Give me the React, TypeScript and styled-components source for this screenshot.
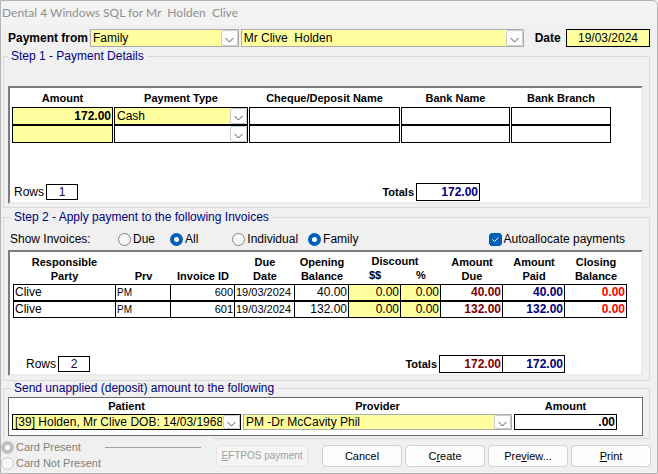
import React from "react";
import styled, { createGlobalStyle, css } from "styled-components";

const YELLOW = "#ffff9f";
const NAVY = "#000080";
const MAROON = "#800000";
const RED = "#ff0000";

const GlobalStyle = createGlobalStyle`
  *, *::before, *::after { box-sizing: border-box; }
  body {
    margin: 0;
    background: #f0f0f0;
    color: #000;
    font-family: "Liberation Sans", Arial, sans-serif;
    font-size: 12px;
    line-height: 14px;
  }
  input, select, button { font: inherit; color: inherit; margin: 0; }
`;

const Window = styled.form`
  display: flex;
  flex-direction: column;
  min-height: 100vh;
  border: 1px solid #b4b4b4;
  border-radius: 0 5px 0 0;
  background: #f0f0f0;
`;

const TitleBar = styled.header`
  height: 24px;
  padding: 0 1px;
  background: #f3f3f3;
  color: #8f8f8f;
  font-family: Lato, "Open Sans", sans-serif;
  font-size: 12px;
  line-height: 24px;
  white-space: pre;
  border-radius: 0 5px 0 0;
`;

const TopRow = styled.div`
  display: flex;
  align-items: center;
  gap: 2px;
  padding: 4px 7px 0;
`;

const FieldLabel = styled.label<{ $width: number; $align?: string }>`
  flex: 0 0 ${(p) => p.$width}px;
  font-weight: bold;
  text-align: ${(p) => p.$align || "left"};
  white-space: nowrap;
`;

const DateInput = styled.input`
  flex: 0 0 84px;
  width: 84px;
  height: 18px;
  padding: 0;
  border: 1px solid #000;
  background: ${YELLOW};
  text-align: center;
`;

const ComboBox = styled.div<{ $grow?: number; $edge?: string; $height: number }>`
  position: relative;
  flex: ${(p) => p.$grow || 1} 1 0;
  min-width: 0;
  height: ${(p) => p.$height}px;
  border: 1px solid ${(p) => p.$edge || "#a9adb3"};
  background: ${YELLOW};
`;

const ComboSelect = styled.select`
  display: block;
  appearance: none;
  width: 100%;
  height: 100%;
  padding: 0 18px 0 2px;
  border: 0;
  border-radius: 0;
  outline: 0;
  background: transparent;
`;

const ComboArrow = styled.span`
  position: absolute;
  top: 0;
  right: 0;
  bottom: 0;
  display: flex;
  align-items: center;
  justify-content: center;
  width: 17px;
  padding-top: 3px;
  border: 1px solid #c8ccd0;
  border-radius: 2px;
  background: #fdfdfd;
  pointer-events: none;
`;

const Group = styled.fieldset<{ $above: number; $pad: string }>`
  min-width: 0;
  margin: ${(p) => p.$above}px 7px 0 2px;
  padding: ${(p) => p.$pad};
  border: 1px solid #dadada;
`;

const GroupTitle = styled.legend<{ $indent?: number }>`
  height: 14px;
  margin-left: ${(p) => p.$indent || 0}px;
  padding: 0 3px;
  color: ${NAVY};
`;

const Sheet = styled.div<{ $min: number }>`
  display: flex;
  flex-direction: column;
  min-height: ${(p) => p.$min}px;
  border: 2px solid;
  border-color: #7c7c7c #ececec #ececec #7c7c7c;
  background: #fff;
`;

const tableBase = css`
  table-layout: fixed;
  border-collapse: separate;
  th { padding: 0; font-size: 11px; font-weight: bold; }
  td { padding: 0; }
`;

const PaymentTable = styled.table`
  ${tableBase}
  width: calc(100% - 30px);
  margin-left: 1px;
  border-spacing: 1px 0;
  th { height: 19px; white-space: nowrap; }
`;

const PaymentCell = styled.td<{ $fill?: boolean }>`
  height: 18px;
  border: 1px solid #000;
  background: ${(p) => (p.$fill ? YELLOW : "#fff")};
`;

const CellInput = styled.input<{ $numeric?: boolean; $bold?: boolean }>`
  display: block;
  width: 100%;
  height: 15px;
  padding: 0 1px;
  border: 0;
  outline: 0;
  background: transparent;
  text-align: ${(p) => (p.$numeric ? "right" : "left")};
  font-weight: ${(p) => (p.$bold ? "bold" : "normal")};
`;

const CellCombo = styled(ComboBox)`
  border: 0;
  background: transparent;
`;

const InvoiceTable = styled.table`
  ${tableBase}
  width: calc(100% - 17px);
  margin-left: 3px;
  border-spacing: 0;
`;

const InvoiceHead = styled.th<{ $row?: "top" | "bottom" }>`
  height: ${(p) => (p.$row === "bottom" ? 15 : p.$row === "top" ? 17 : 32)}px;
  && { padding-bottom: ${(p) => (p.$row === "bottom" ? 2 : 1)}px; }
  vertical-align: bottom;
  line-height: ${(p) => (p.$row === "bottom" ? 13 : 14)}px;
`;

const InvoiceCell = styled.td<{ $tone?: string; $numeric?: boolean; $fill?: boolean; $size?: number }>`
  height: 17px;
  border: 1px solid #000;
  border-left-width: 0;
  background: ${(p) => (p.$fill ? YELLOW : "#fff")};
  color: ${(p) => p.$tone || "#000"};
  font-weight: ${(p) => (p.$tone ? "bold" : "normal")};
  font-size: ${(p) => p.$size || 12}px;
  text-align: ${(p) => (p.$numeric ? "right" : "left")};
  white-space: nowrap;
  line-height: 15px;
  && { padding: 0 1px; }
  &:first-child { border-left-width: 1px; }
`;

const DiscountInput = styled(CellInput)`
  padding: 0;
`;

const SheetFooter = styled.div<{ $left: number; $right: number }>`
  display: flex;
  align-items: center;
  justify-content: space-between;
  margin-top: auto;
  padding: 0 ${(p) => p.$right}px 1px ${(p) => p.$left}px;
`;

const Tally = styled.div`
  display: flex;
  align-items: center;
  gap: 2px;
`;

const TotalsLabel = styled.span`
  font-size: 11px;
  font-weight: bold;
`;

const RowCount = styled.output`
  width: 32px;
  height: 16px;
  border: 1px solid #000;
  color: #2a0a3a;
  text-align: center;
`;

const TotalBoxes = styled.div`
  display: flex;
  border: 1px solid #000;
`;

const Total = styled.output<{ $tone: string }>`
  width: 62px;
  height: 16px;
  padding-right: 1px;
  color: ${(p) => p.$tone};
  font-weight: bold;
  line-height: 16px;
  text-align: right;
  & + & { border-left: 1px solid #000; }
`;

const Options = styled.div`
  display: flex;
  align-items: center;
  height: 26px;
  padding: 4px 18px 0 2px;
`;

const OptionsCaption = styled.span`
  width: 108px;
`;

const OptionGroup = styled.div<{ $gap: number }>`
  display: flex;
  gap: ${(p) => p.$gap}px;
  margin-right: 34px;
`;

const OptionLabel = styled.label<{ $muted?: boolean; $last?: boolean }>`
  display: flex;
  align-items: center;
  gap: 2px;
  margin-left: ${(p) => (p.$last ? "auto" : "0")};
  color: ${(p) => (p.$muted ? "#808080" : "#000")};
  font-size: ${(p) => (p.$muted ? 11 : 12)}px;
`;

const Radio = styled.input`
  appearance: none;
  width: 13px;
  height: 13px;
  border: 1px solid #858585;
  border-radius: 50%;
  background: #f6f6f6;
  &:checked { border: 4px solid #005fb8; background: #fff; }
  &:disabled { border-color: #c6c6c6; }
  &:disabled:checked { border-color: #bfbfbf; background: #fff; }
`;

const CheckHolder = styled.span`
  position: relative;
  display: flex;
`;

const CheckInput = styled.input`
  appearance: none;
  width: 13px;
  height: 13px;
  border: 1px solid #858585;
  border-radius: 3px;
  background: #fff;
  &:checked { border-color: #005fb8; background: #005fb8; }
  & + svg { position: absolute; inset: 0; pointer-events: none; visibility: hidden; }
  &:checked + svg { visibility: visible; }
`;

const DepositPanel = styled.div`
  display: grid;
  grid-template-columns: 229fr 269fr 103fr;
  column-gap: 2px;
  padding: 1px 25px 5px 3px;
  border: 1px solid #696969;
  background: #fff;
`;

const DepositField = styled.label`
  display: flex;
  flex-direction: column;
  min-width: 0;
`;

const DepositCaption = styled.span`
  height: 15px;
  font-size: 11px;
  font-weight: bold;
  text-align: center;
`;

const DepositCombo = styled(ComboBox)`
  flex: none;
`;

const DepositAmount = styled.input`
  width: 100%;
  height: 16px;
  padding: 0 1px;
  border: 1px solid #000;
  background: #fff;
  font-weight: bold;
  text-align: right;
`;

const Footer = styled.footer`
  display: flex;
  align-items: flex-start;
`;

const CardOptions = styled.div`
  position: relative;
  flex: 0 0 213px;
  display: grid;
  grid-template-columns: auto 96px;
  justify-content: space-between;
  align-items: center;
  row-gap: 2px;
  margin-top: -1px;
  padding: 2px 13px 0 0;
  background: #f0f0f0;
`;

const Rule = styled.hr`
  width: 96px;
  margin: 0;
  border: 0;
  border-top: 1px solid #a0a0a0;
`;

const Actions = styled.div`
  flex: 1;
  display: flex;
  gap: 3px;
  padding: 6px 6px 5px 2px;
`;

const ActionButton = styled.button`
  flex: 0 1 80px;
  height: 22px;
  padding: 0;
  border: 1px solid #d0d0d0;
  border-radius: 4px;
  background: #fdfdfd;
  font-size: 11px;
  white-space: nowrap;
  &:disabled {
    flex-basis: 92px;
    margin-right: auto;
    border-color: #e4e4e4;
    background: #f5f5f5;
    color: #a0a0a0;
    font-size: 10px;
  }
`;

type ComboProps = {
  label: string;
  value: string;
  grow?: number;
  edge?: string;
  height?: number;
  as?: typeof ComboBox;
  id?: string;
};

function Combo({ label, value, grow, edge, height = 18, as: Box = ComboBox, id }: ComboProps) {
  return (
    <Box $grow={grow} $edge={edge} $height={height}>
      <ComboSelect id={id} aria-label={label} defaultValue={value}>
        <option value={value}>{value}</option>
      </ComboSelect>
      <ComboArrow>
        <svg width="9" height="6" viewBox="0 0 9 6" fill="none" stroke="#555" aria-hidden="true">
          <path d="M0.5 1 L4.5 5 L8.5 1" />
        </svg>
      </ComboArrow>
    </Box>
  );
}

const payments = [
  { amount: "172.00", type: "Cash" },
  { amount: "", type: "" },
];

const paymentColumns = [
  { title: "Amount", width: 101 },
  { title: "Payment Type", width: 134 },
  { title: "Cheque/Deposit Name", width: 151 },
  { title: "Bank Name", width: 109 },
  { title: "Bank Branch", width: 100 },
];

const invoiceWidths = [103, 55, 64, 60, 54, 52, 40, 62, 62, 62];

const invoices = [
  { party: "Clive", prv: "PM", id: "600", date: "19/03/2024", opening: "40.00", due: "40.00", paid: "40.00" },
  { party: "Clive", prv: "PM", id: "601", date: "19/03/2024", opening: "132.00", due: "132.00", paid: "132.00" },
];

export default function App() {
  return (
    <>
      <GlobalStyle />
      <Window onSubmit={(e) => e.preventDefault()}>
        <TitleBar>{"Dental 4 Windows SQL for Mr  Holden  Clive"}</TitleBar>

        <TopRow>
          <FieldLabel $width={80} htmlFor="payment-from">Payment from</FieldLabel>
          <Combo id="payment-from" label="Payment from" value="Family" grow={148} />
          <Combo label="Payer" value={"Mr Clive \u00a0Holden"} grow={284} />
          <FieldLabel $width={38} $align="right" htmlFor="pay-date">Date&nbsp;</FieldLabel>
          <DateInput id="pay-date" defaultValue="19/03/2024" />
        </TopRow>

        <Group $above={2} $pad="23px 6px 3px 4px">
          <GroupTitle>Step 1 - Payment Details</GroupTitle>
          <Sheet $min={118}>
            <PaymentTable>
              <colgroup>
                {paymentColumns.map((c) => <col key={c.title} width={c.width} />)}
              </colgroup>
              <thead>
                <tr>{paymentColumns.map((c) => <th key={c.title}>{c.title}</th>)}</tr>
              </thead>
              <tbody>
                {payments.map((p, i) => (
                  <tr key={i}>
                    <PaymentCell $fill>
                      <CellInput $numeric $bold aria-label="Amount" defaultValue={p.amount} />
                    </PaymentCell>
                    <PaymentCell $fill={p.type !== ""}>
                      <Combo as={CellCombo} label="Payment Type" value={p.type} height={16} />
                    </PaymentCell>
                    <PaymentCell><CellInput aria-label="Cheque/Deposit Name" /></PaymentCell>
                    <PaymentCell><CellInput aria-label="Bank Name" /></PaymentCell>
                    <PaymentCell><CellInput aria-label="Bank Branch" /></PaymentCell>
                  </tr>
                ))}
              </tbody>
            </PaymentTable>
            <SheetFooter $left={4} $right={161}>
              <Tally>Rows<RowCount>1</RowCount></Tally>
              <Tally>
                <TotalsLabel>Totals</TotalsLabel>
                <TotalBoxes><Total $tone={NAVY}>172.00</Total></TotalBoxes>
              </Tally>
            </SheetFooter>
          </Sheet>
        </Group>

        <Group $above={2} $pad="0 6px 4px 4px">
          <GroupTitle $indent={3}>Step 2 - Apply payment to the following Invoices</GroupTitle>
          <Options>
            <OptionsCaption>Show Invoices:</OptionsCaption>
            <OptionGroup $gap={15}>
              <OptionLabel><Radio type="radio" name="status" />Due</OptionLabel>
              <OptionLabel><Radio type="radio" name="status" defaultChecked />All</OptionLabel>
            </OptionGroup>
            <OptionGroup $gap={10}>
              <OptionLabel><Radio type="radio" name="scope" />Individual</OptionLabel>
              <OptionLabel><Radio type="radio" name="scope" defaultChecked />Family</OptionLabel>
            </OptionGroup>
            <OptionLabel $last>
              <CheckHolder>
                <CheckInput type="checkbox" defaultChecked />
                <svg width="13" height="13" viewBox="0 0 13 13" fill="none" stroke="#fff" aria-hidden="true">
                  <path d="M3.5 6.5 L5.5 8.5 L9.5 4.5" />
                </svg>
              </CheckHolder>
              Autoallocate payments
            </OptionLabel>
          </Options>
          <Sheet $min={126}>
            <InvoiceTable>
              <colgroup>
                {invoiceWidths.map((w, i) => <col key={i} width={w} />)}
              </colgroup>
              <thead>
                <tr>
                  <InvoiceHead rowSpan={2}>Responsible<br />Party</InvoiceHead>
                  <InvoiceHead rowSpan={2}>Prv</InvoiceHead>
                  <InvoiceHead rowSpan={2}>Invoice ID</InvoiceHead>
                  <InvoiceHead rowSpan={2}>Due<br />Date</InvoiceHead>
                  <InvoiceHead rowSpan={2}>Opening<br />Balance</InvoiceHead>
                  <InvoiceHead colSpan={2} $row="top">Discount</InvoiceHead>
                  <InvoiceHead rowSpan={2}>Amount<br />Due</InvoiceHead>
                  <InvoiceHead rowSpan={2}>Amount<br />Paid</InvoiceHead>
                  <InvoiceHead rowSpan={2}>Closing<br />Balance</InvoiceHead>
                </tr>
                <tr>
                  <InvoiceHead $row="bottom">$$</InvoiceHead>
                  <InvoiceHead $row="bottom">%</InvoiceHead>
                </tr>
              </thead>
              <tbody>
                {invoices.map((v) => (
                  <tr key={v.id}>
                    <InvoiceCell>{v.party}</InvoiceCell>
                    <InvoiceCell $size={10}>{v.prv}</InvoiceCell>
                    <InvoiceCell $size={11} $numeric>{v.id}</InvoiceCell>
                    <InvoiceCell $size={11}>{v.date}</InvoiceCell>
                    <InvoiceCell $numeric>{v.opening}</InvoiceCell>
                    <InvoiceCell $fill><DiscountInput $numeric aria-label="Discount amount" defaultValue="0.00" /></InvoiceCell>
                    <InvoiceCell $fill><DiscountInput $numeric aria-label="Discount percent" defaultValue="0.00" /></InvoiceCell>
                    <InvoiceCell $numeric $tone={MAROON}>{v.due}</InvoiceCell>
                    <InvoiceCell $numeric $tone={NAVY}>{v.paid}</InvoiceCell>
                    <InvoiceCell $numeric $tone={RED}>0.00</InvoiceCell>
                  </tr>
                ))}
              </tbody>
            </InvoiceTable>
            <SheetFooter $left={16} $right={76}>
              <Tally>Rows<RowCount>2</RowCount></Tally>
              <Tally>
                <TotalsLabel>Totals</TotalsLabel>
                <TotalBoxes>
                  <Total $tone={MAROON}>172.00</Total>
                  <Total $tone={NAVY}>172.00</Total>
                </TotalBoxes>
              </Tally>
            </SheetFooter>
          </Sheet>
        </Group>

        <Group $above={0} $pad="2px 6px 2px 4px">
          <GroupTitle $indent={3}>Send unapplied (deposit) amount to the following</GroupTitle>
          <DepositPanel>
            <DepositField>
              <DepositCaption>Patient</DepositCaption>
              <Combo as={DepositCombo} label="Patient" value="[39] Holden, Mr Clive DOB: 14/03/1968" edge="#000" height={16} />
            </DepositField>
            <DepositField>
              <DepositCaption>Provider</DepositCaption>
              <Combo as={DepositCombo} label="Provider" value="PM -Dr McCavity Phil" height={16} />
            </DepositField>
            <DepositField>
              <DepositCaption>Amount</DepositCaption>
              <DepositAmount defaultValue=".00" />
            </DepositField>
          </DepositPanel>
        </Group>

        <Footer>
          <CardOptions>
            <OptionLabel $muted><Radio type="radio" name="card" disabled defaultChecked />Card Present</OptionLabel>
            <Rule />
            <OptionLabel $muted><Radio type="radio" name="card" disabled />Card Not Present</OptionLabel>
          </CardOptions>
          <Actions>
            <ActionButton type="button" disabled><u>E</u>FTPOS payment</ActionButton>
            <ActionButton type="button">Cancel</ActionButton>
            <ActionButton type="button">C<u>r</u>eate</ActionButton>
            <ActionButton type="button">Pre<u>v</u>iew...</ActionButton>
            <ActionButton type="button"><u>P</u>rint</ActionButton>
          </Actions>
        </Footer>
      </Window>
    </>
  );
}
